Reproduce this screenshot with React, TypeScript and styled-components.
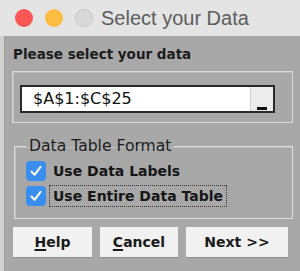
import React from "react";
import styled, { createGlobalStyle } from "styled-components";

const Global = createGlobalStyle`
  html, body { margin: 0; padding: 0; background: #a8a8a8; }
  body { font-family: "DejaVu Sans", "Liberation Sans", sans-serif; }
`;

const Window = styled.div`
  width: 300px;
  height: 271px;
  background: #a8a8a8;
  display: flex;
  flex-direction: column;
  overflow: hidden;
`;

const TitleBar = styled.div`
  height: 36px;
  flex: none;
  background: #e4e4e4;
  display: flex;
  align-items: center;
  padding-left: 15px;
  box-sizing: border-box;
`;

const Light = styled.span<{ $c: string; $ring?: string; $last?: boolean }>`
  width: 18px;
  height: 18px;
  border-radius: 50%;
  background: ${(p) => p.$c};
  box-shadow: ${(p) => (p.$ring ? `inset 0 0 0 1px ${p.$ring}` : "none")};
  margin-right: ${(p) => (p.$last ? "8px" : "12px")};
  flex: none;
`;

const Title = styled.div`
  font-family: "Liberation Sans", Arial, sans-serif;
  font-size: 20px;
  color: #5c5c5c;
`;

const Body = styled.div`
  flex: 1;
  border-left: 4px solid #d2d2d2;
  box-shadow: inset 1px 0 0 #9a9a9a;
  padding: 9px 7px 0 8px;
  display: flex;
  flex-direction: column;
`;

const Heading = styled.div`
  font-weight: bold;
  font-size: 13.5px;
  color: #1c1c1c;
  height: 18px;
  line-height: 18px;
  padding-left: 1px;
`;

const InputFrame = styled.div`
  margin-top: 8px;
  height: 52px;
  border: 1px solid #d9d9d9;
  box-shadow: inset 1px 1px 0 #bdbdbd;
  box-sizing: border-box;
  padding: 13px 17px 0 7px;
`;

const Field = styled.div`
  height: 28px;
  border: 2px solid #2a2a2a;
  background: #fff;
  box-sizing: border-box;
  display: flex;
`;

const FieldText = styled.div`
  flex: 1;
  font-size: 16px;
  line-height: 24px;
  padding-left: 11px;
  color: #111;
`;

const Ellipsis = styled.div`
  width: 23px;
  background: #ededed;
  border-left: 1px solid #cfcfcf;
  display: flex;
  align-items: flex-end;
  justify-content: center;
  padding-bottom: 1px;
  box-sizing: border-box;
  &::after {
    content: "";
    width: 10px;
    height: 3px;
    background: #111;
  }
`;

const Group = styled.fieldset`
  margin: 14px 0 0 2px;
  padding: 5px 0 0 11px;
  height: 82px;
  box-sizing: border-box;
  border: 1px solid #dedede;
  box-shadow: inset 1px 1px 0 #bcbcbc;
  display: flex;
  flex-direction: column;
  gap: 3px;
`;

const Legend = styled.legend`
  font-size: 15.6px;
  color: #1c1c1c;
  padding: 0 3px;
  line-height: 18px;
`;

const Row = styled.div`
  display: flex;
  align-items: center;
  height: 22px;
`;

const Box = styled.span`
  width: 20px;
  height: 20px;
  border-radius: 4px;
  background: #3a8ef0;
  display: flex;
  align-items: center;
  justify-content: center;
  flex: none;
`;

const Label = styled.span<{ $focus?: boolean }>`
  font-weight: bold;
  font-size: 14px;
  color: #161616;
  margin-left: 3px;
  padding: 2px 3px;
  border: 1px dotted ${(p) => (p.$focus ? "#333" : "transparent")};
`;

const Buttons = styled.div`
  display: flex;
  gap: 8px;
  margin-top: 8px;
  padding-left: 1px;
`;

const Button = styled.div<{ $w: number }>`
  width: ${(p) => p.$w}px;
  height: 30px;
  background: #f1f1f1;
  box-shadow: 0 1px 0 #8e8e8e;
  display: flex;
  align-items: center;
  justify-content: center;
  font-weight: bold;
  font-size: 14px;
  color: #1a1a1a;
  u { text-decoration-thickness: 2px; text-underline-offset: 2px; }
`;

const Check = () => (
  <svg width="12" height="12" viewBox="0 0 12 12">
    <path d="M1.5 6.5 L4.6 9.8 L10.5 1.8" fill="none" stroke="#fff" strokeWidth="2" strokeLinecap="round" strokeLinejoin="round" />
  </svg>
);

export default function App() {
  return (
    <>
      <Global />
      <Window>
        <TitleBar>
          <Light $c="#fc5753" />
          <Light $c="#fdbc40" />
          <Light $c="#d8d8d8" $ring="#c9c9c9" $last />
          <Title>Select your Data</Title>
        </TitleBar>
        <Body>
          <Heading>Please select your data</Heading>
          <InputFrame>
            <Field>
              <FieldText>$A$1:$C$25</FieldText>
              <Ellipsis />
            </Field>
          </InputFrame>
          <Group>
            <Legend>Data Table Format</Legend>
            <Row>
              <Box><Check /></Box>
              <Label>Use Data Labels</Label>
            </Row>
            <Row>
              <Box><Check /></Box>
              <Label $focus>Use Entire Data Table</Label>
            </Row>
          </Group>
          <Buttons>
            <Button $w={79}><span><u>H</u>elp</span></Button>
            <Button $w={78}><span><u>C</u>ancel</span></Button>
            <Button $w={102}>Next &gt;&gt;</Button>
          </Buttons>
        </Body>
      </Window>
    </>
  );
}
